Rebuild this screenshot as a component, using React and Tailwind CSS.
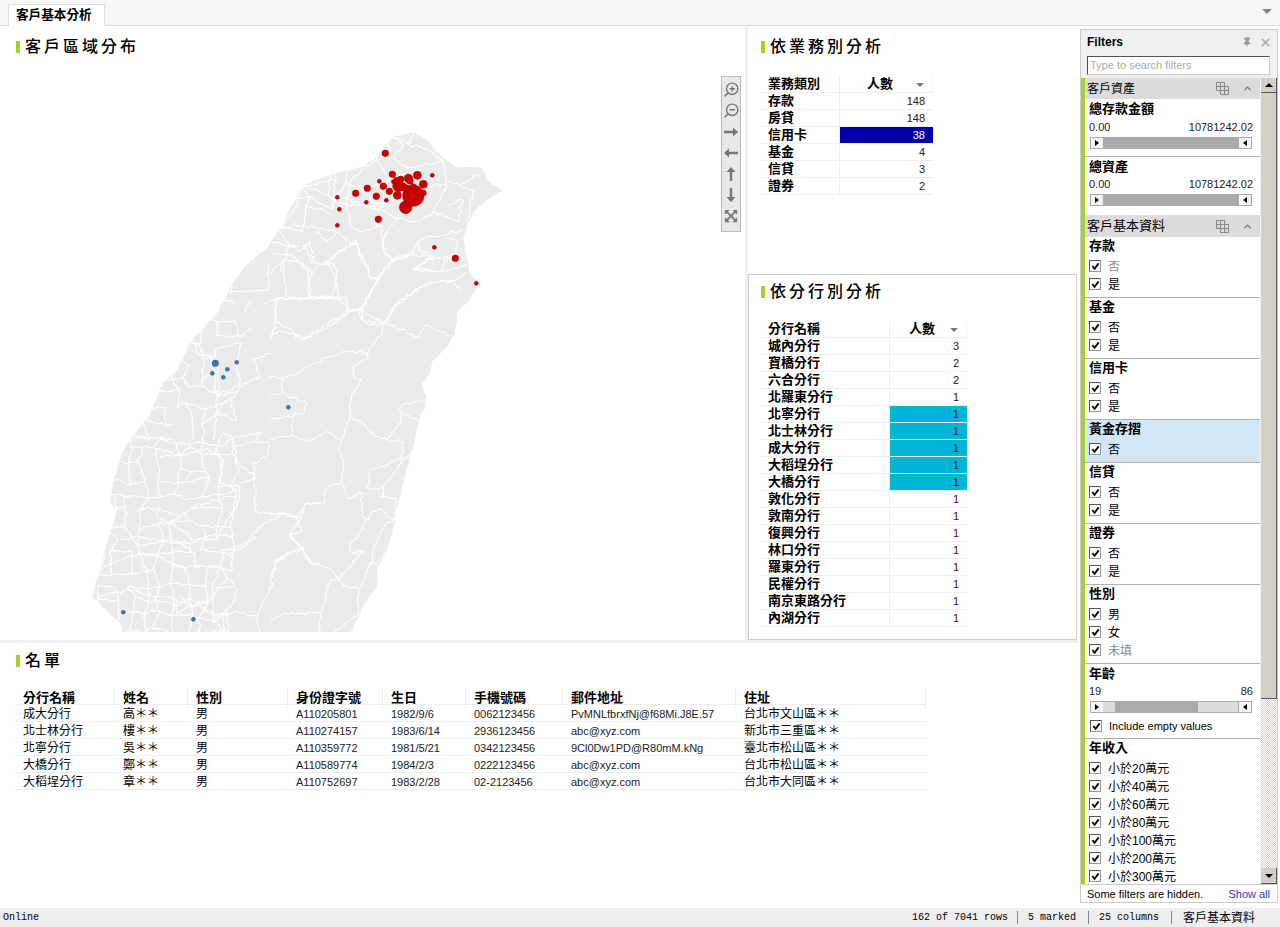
import { ZoomIn, ZoomOut, ChevronUp, X, Pin } from 'lucide-react'

// map outline in page coordinates
const outline = [[393,137],[413,132],[427,140],[443,158],[457,167],[482,168],[487,180],[503,191],[487,200],[473,213],[467,225],[463,238],[470,273],[478,283],[470,300],[458,310],[455,333],[447,347],[432,362],[430,373],[422,383],[427,400],[420,417],[413,447],[407,467],[398,503],[395,522],[388,547],[377,570],[377,587],[365,603],[350,634],[123,634],[120,623],[92,597],[100,570],[108,540],[117,510],[110,503],[113,483],[122,453],[132,437],[150,415],[163,383],[177,370],[190,343],[217,313],[233,282],[247,265],[267,248],[287,215],[303,185],[330,175],[363,167],[377,157]]

// district lines, noted in three different crops of the map
const east = [
  [[260,0],[265,45],[295,80],[300,110],[325,120],[355,70],[430,35],[445,0]],
  [[340,0],[345,35],[365,62],[430,35]],
  [[430,85],[470,60],[530,50],[585,55]],
  [[430,85],[510,95],[530,50]],
  [[350,250],[375,195],[450,140],[510,125],[550,125],[575,150]],
  [[325,120],[270,210],[345,250],[325,290],[290,340],[290,360],[250,380],[250,405],[275,420],[245,465],[240,530],[215,600],[205,630],[220,660],[215,730],[235,775],[275,760],[275,825],[295,840],[325,805],[350,830],[380,840]],
  [[345,250],[445,290],[465,255],[550,290]],
  [[270,210],[235,215],[205,170],[115,175],[20,175],[15,260],[0,300]],
  [[270,210],[275,240],[305,255],[345,250]],
  [[235,215],[200,245],[140,280],[100,300],[50,275],[0,280]],
  [[290,340],[230,335],[175,350],[110,380],[70,405],[40,415],[0,410]],
  [[40,415],[35,460],[0,465]],
  [[35,460],[110,490],[100,520],[70,525],[65,585],[110,605],[170,575],[215,600]],
  [[240,530],[280,550],[310,585],[350,600]],
  [[350,600],[390,550],[395,495],[470,480]],
  [[395,520],[445,540]],
  [[350,600],[400,605],[395,650],[340,680],[300,690],[290,745],[340,745],[395,660],[425,645]],
  [[0,535],[65,530]],
  [[0,600],[30,590],[65,585]],
  [[215,730],[170,745],[165,785],[105,795],[95,830],[60,885],[100,925],[120,965],[185,990],[205,1020],[240,1045],[265,1045],[265,1120],[195,1175]],
  [[100,925],[50,940],[15,975],[5,1015],[0,1015]],
  [[0,825],[40,818],[80,830],[95,830]],
  [[205,1020],[280,935],[240,935],[240,905],[260,895],[290,840]],
  [[340,745],[335,770],[380,775],[375,840],[350,845],[320,905],[300,970],[325,975]],
  [[300,970],[270,1045]],
  [[205,1020],[180,1020],[155,1110],[145,1175]],
  [[0,1145],[40,1120],[150,1120]],
  [[260,0],[170,65],[125,95],[115,170]],
  [[195,110],[205,170]],
  [[170,65],[205,115]],
  [[100,15],[130,70]],
  [[0,100],[40,60],[100,70],[125,95]],
  [[40,60],[50,170]],
]

const south = [
  [[340,10],[355,45],[395,50],[405,100],[410,165],[420,160],[500,130],[540,110],[520,60],[575,40]],
  [[410,165],[410,240],[400,300]],
  [[155,290],[200,300],[240,290],[280,310],[380,310],[420,320],[470,290],[550,280]],
  [[240,350],[320,345],[380,325],[420,350],[425,430],[480,440],[470,500],[440,540],[410,600],[345,600],[290,560],[230,530],[240,500]],
  [[330,500],[470,465]],
  [[120,600],[180,590],[240,600],[300,610],[345,640],[345,680],[420,680]],
  [[60,690],[120,660],[190,640],[240,650],[300,680],[370,680]],
  [[50,775],[90,760],[160,750],[220,770],[260,770],[290,780],[290,820],[350,790],[400,825],[430,820]],
  [[525,410],[480,430]],
  [[525,410],[525,510],[540,520],[610,520],[650,535],[680,490],[720,490]],
  [[610,520],[540,560],[490,620],[450,640]],
  [[650,535],[665,570],[630,590],[660,620],[690,670],[720,670]],
  [[525,410],[520,370],[565,345],[565,305],[530,305],[465,320],[475,370],[525,405]],
  [[525,305],[540,280]],
  [[530,830],[470,815],[430,825]],
  [[530,830],[540,876]],
  [[530,830],[580,730],[570,720],[590,660],[660,630]],
  [[420,630],[470,625],[530,590]],
  [[440,710],[470,745],[460,790],[430,820],[430,876]],
  [[420,680],[440,710],[380,790],[330,800],[300,770]],
]

const north = [
  [[370,180],[440,210],[480,235]],
  [[450,150],[445,210],[500,240],[510,300]],
  [[550,130],[510,175],[500,240],[545,240],[640,230]],
  [[590,100],[620,150]],
  [[640,35],[670,60],[640,100],[680,130],[730,120],[790,110]],
  [[700,20],[690,60],[740,70],[790,110]],
  [[790,110],[800,170],[840,180],[900,145]],
  [[730,180],[800,180],[760,260],[720,290],[650,280],[610,340],[610,380],[640,405]],
  [[545,240],[600,250],[650,280]],
  [[510,300],[540,320],[600,300],[610,340]],
  [[840,180],[880,200],[862,300]],
  [[800,240],[850,225],[835,290],[760,260]],
  [[720,340],[790,330],[850,315]],
  [[720,340],[715,375],[760,395],[700,435],[780,440],[862,420]],
  [[800,340],[830,345],[830,380],[800,410]],
  [[640,405],[700,390],[760,395]],
  [[600,460],[640,405]],
  [[530,360],[550,400],[570,460],[600,460]],
  [[505,350],[530,360],[530,345]],
  [[430,420],[500,360]],
  [[410,310],[470,320],[500,350]],
  [[470,320],[440,350],[410,320]],
  [[375,240],[440,260],[460,270]],
  [[300,310],[370,300],[410,310]],
  [[320,360],[360,380],[390,350],[400,410],[430,420]],
  [[280,390],[330,390],[370,420],[385,440],[385,515]],
  [[430,420],[460,415],[470,460],[460,515],[385,515]],
  [[290,520],[500,520],[505,560],[370,640],[290,590],[285,530]],
  [[500,560],[545,550]],
  [[545,550],[595,460]],
  [[545,550],[550,590],[610,595],[650,540],[745,470],[830,465],[860,440]],
  [[370,180],[350,240],[300,310]],
]

const fromEast = ([x, y]) => [270 + x / 3, 240 + y / 3]
const fromSouth = ([x, y]) => [80 + x / 3, 340 + y / 3]
const fromNorth = ([x, y]) => [180 + x / 3, 125 + y / 3]

// small fixed wobble, so lines look like real district borders
let seed = 11
const rand = () => {
  seed = (seed * 16807) % 2147483647
  return seed / 2147483647 - 0.5
}

const wobble = (points, amp = 3) => {
  let d = `M${points[0][0].toFixed(1)} ${points[0][1].toFixed(1)}`
  for (let i = 1; i < points.length; i++) {
    const [ax, ay] = points[i - 1]
    const [bx, by] = points[i]
    const steps = Math.max(1, Math.round(Math.hypot(bx - ax, by - ay) / 3))
    for (let s = 1; s <= steps; s++) {
      const end = s === steps
      const x = ax + ((bx - ax) * s) / steps + (end ? 0 : rand() * amp)
      const y = ay + ((by - ay) * s) / steps + (end ? 0 : rand() * amp)
      d += `L${x.toFixed(1)} ${y.toFixed(1)}`
    }
  }
  return d
}

// the west and the north have many small districts: an uneven mesh
const edgeOfSmall = [[130,450],[200,440],[220,345],[300,285],[345,245],[640,235]]
const isSmall = (x, y) => {
  for (let i = 1; i < edgeOfSmall.length; i++) {
    const [ay, ax] = edgeOfSmall[i - 1]
    const [by, bx] = edgeOfSmall[i]
    if (y >= ay && y <= by) return x <= ax + ((bx - ax) * (y - ay)) / (by - ay)
  }
  return false
}

const mesh = (top, bottom, size, keep) => {
  const nodes = []
  for (let y = top; y <= bottom; y += size) {
    const row = []
    for (let x = 84; x <= 470; x += size) {
      row.push([x + rand() * size * 0.9, y + rand() * size * 0.9])
    }
    nodes.push(row)
  }
  const lines = []
  nodes.forEach((row, r) =>
    row.forEach((node, c) => {
      const right = row[c + 1]
      const below = nodes[r + 1]?.[c]
      if (right && isSmall(...node) && isSmall(...right) && rand() + 0.5 < keep) lines.push([node, right])
      if (below && isSmall(...node) && isSmall(...below) && rand() + 0.5 < keep) lines.push([node, below])
    })
  )
  return lines.map((l) => wobble(l, 2.5))
}

const borders = [
  ...east.map((l) => wobble(l.map(fromEast))),
  ...south.map((l) => wobble(l.map(fromSouth))),
  ...north.map((l) => wobble(l.map(fromNorth))),
  ...mesh(136, 296, 22, 0.7),
  ...mesh(300, 640, 15, 0.72),
]

const coast = wobble([...outline, outline[0]], 1.5) + 'Z'

const redDots = [[616,85,10],[637,148,10],[712,151,12],[757,151,6],[598,169,6],[610,184,10],[562,190,10],[527,205,10],[589,214,10],[628,199,10],[652,211,12],[472,217,6],[559,232,6],[619,226,6],[478,253,6],[595,283,10],[472,301,6],[763,367,6],[826,400,10],[889,475,6],[700,212,32],[677,247,19],[730,178,12],[730,204,9],[685,160,13],[662,163,10],[648,165,8],[655,183,17],[668,185,12],[700,184,8],[680,190,10],[690,168,10],[640,170,6]]
const blueDots = [[406,70,10],[470,67,6],[442,88,6],[397,100,6],[430,112,6],[625,202,6],[130,817,6],[340,838,6]]

const services = [['存款', 148], ['房貸', 148], ['信用卡', 38], ['基金', 4], ['信貸', 3], ['證券', 2]]
const branches = [['城內分行', 3], ['寶橋分行', 2], ['六合分行', 2], ['北羅東分行', 1], ['北寧分行', 1], ['北士林分行', 1], ['成大分行', 1], ['大稻埕分行', 1], ['大橋分行', 1], ['敦化分行', 1], ['敦南分行', 1], ['復興分行', 1], ['林口分行', 1], ['羅東分行', 1], ['民權分行', 1], ['南京東路分行', 1], ['內湖分行', 1]]
const people = [
  ['成大分行', '高＊＊', '男', 'A110205801', '1982/9/6', '0062123456', 'PvMNLfbrxfNj@f68Mi.J8E.57', '台北市文山區＊＊'],
  ['北士林分行', '樓＊＊', '男', 'A110274157', '1983/6/14', '2936123456', 'abc@xyz.com', '新北市三重區＊＊'],
  ['北寧分行', '吳＊＊', '男', 'A110359772', '1981/5/21', '0342123456', '9Cl0Dw1PD@R80mM.kNg', '臺北市松山區＊＊'],
  ['大橋分行', '鄭＊＊', '男', 'A110589774', '1984/2/3', '0222123456', 'abc@xyz.com', '台北市松山區＊＊'],
  ['大稻埕分行', '章＊＊', '男', 'A110752697', '1983/2/28', '02-2123456', 'abc@xyz.com', '台北市大同區＊＊'],
]
const peopleHeader = ['分行名稱', '姓名', '性別', '身份證字號', '生日', '手機號碼', '郵件地址', '住址']
const peopleCols = 'grid grid-cols-[100px_73px_100px_95px_83px_97px_173px_190px]'

function Title({ children }) {
  return (
    <div className="flex items-center gap-[5px] pl-4">
      <div className="w-1 h-3 bg-[#a6d02d]" />
      <span className="text-base font-medium tracking-[3px] text-black leading-none">{children}</span>
    </div>
  )
}

function CountTable({ head, rows, nameWidth, marked, markColor, markText, darkFrom }) {
  return (
    <div className="text-[13px]">
      <div className="flex h-[17px] border-b border-[#eee] items-center font-bold">
        <div className="pl-[7px] border-r border-[#eee] h-full flex items-center" style={{ width: nameWidth }}>{head}</div>
        <div className="flex-1 flex items-center justify-center relative h-full border-r border-[#f4f4f4]">
          <span className="mr-3">人數</span>
          <span className="absolute right-2 top-[7px] w-0 h-0 border-x-4 border-x-transparent border-t-[4px] border-t-[#777]" />
        </div>
      </div>
      {rows.map(([name, count], i) => (
        <div key={name} className="flex h-[17px] border-b border-[#eee] items-center">
          <div className="pl-[7px] font-bold h-full flex items-center border-r border-[#eee]" style={{ width: nameWidth }}>{name}</div>
          <div className={`flex-1 h-full flex items-center justify-end pr-2 text-[11px] ${marked.includes(i) ? `${markColor} ${markText}` : i >= darkFrom ? 'text-[#500060]' : 'text-[#222]'}`}>
            {count}
          </div>
        </div>
      ))}
    </div>
  )
}

function ToolArrow({ turn }) {
  return (
    <svg viewBox="0 0 16 16" className={`w-4 h-4 ${turn}`}>
      <path d="M1 6.8h9V3.5l5 4.5-5 4.5V9.2H1z" fill="#777" />
    </svg>
  )
}

function ToolFit() {
  return (
    <svg viewBox="0 0 16 16" className="w-[14px] h-[14px]" fill="#777" stroke="#777">
      <path d="M1 1h5.5L1 6.5zM15 1v5.5L9.5 1zM1 15v-5.5L6.5 15zM15 15H9.5L15 9.5z" stroke="none" />
      <path d="M3 3l10 10M13 3L3 13" strokeWidth="2.2" />
    </svg>
  )
}

function MapTools() {
  const tools = [
    <ZoomIn size={17} strokeWidth={2} className="-scale-x-100" />,
    <ZoomOut size={17} strokeWidth={2} className="-scale-x-100" />,
    <ToolArrow turn="" />,
    <ToolArrow turn="rotate-180" />,
    <ToolArrow turn="-rotate-90" />,
    <ToolArrow turn="rotate-90" />,
    <ToolFit />,
  ]
  return (
    <div className="absolute left-[721px] top-[50px] w-5 h-[156px] bg-[#e8e8e8] border border-[#bbb] flex flex-col items-center pt-[2px] text-[#777]">
      {tools.map((tool, i) => (
        <div key={i} className="h-[21px] flex items-center justify-center">{tool}</div>
      ))}
    </div>
  )
}

function TwMap() {
  return (
    <svg viewBox="0 68 745 564" className="block w-[745px] h-[564px]">
      <defs>
        <clipPath id="island">
          <path d={coast} />
        </clipPath>
      </defs>
      <path d={coast} fill="#ebebeb" />
      <g clipPath="url(#island)">
        {borders.map((d, i) => (
          <path key={i} d={d} fill="none" stroke="#fff" strokeWidth="1.1" strokeLinejoin="round" />
        ))}
      </g>
      {redDots.map(([x, y, r], i) => (
        <circle key={i} cx={180 + x / 3} cy={125 + y / 3} r={r / 3} fill="#c80000" stroke="#a00000" strokeWidth="0.5" />
      ))}
      {blueDots.map(([x, y, r], i) => (
        <circle key={i} cx={80 + x / 3} cy={340 + y / 3} r={r / 3} fill="#3f75ab" stroke="#35628f" strokeWidth="0.5" />
      ))}
    </svg>
  )
}

function Check({ label, gray, latin }) {
  return (
    <div className="flex items-center h-[18px] pl-1">
      <span className="w-3 h-3 bg-white border border-[#999] border-t-[#555] border-l-[#555] flex items-center justify-center shrink-0">
        <svg viewBox="0 0 10 10" className="w-[9px] h-[9px]">
          <path d="M1.5 4.5 L4 7.5 L8.5 1.5" fill="none" stroke="#000" strokeWidth="2" />
        </svg>
      </span>
      <span className={`ml-[7px] ${latin ? 'text-[11px]' : 'text-xs pt-[2px]'} ${gray ? 'text-[#888]' : 'text-black'}`}>{label}</span>
    </div>
  )
}

function ArrowBtn({ left }) {
  return (
    <span className="w-3 h-full bg-[#f4f4f4] flex items-center justify-center shrink-0">
      <span className={`w-0 h-0 border-y-[3px] border-y-transparent ${left ? 'border-r-[4px] border-r-black' : 'border-l-[4px] border-l-black'}`} />
    </span>
  )
}

function Range({ from, to, age }) {
  return (
    <div className="px-1">
      <div className="flex justify-between text-[11px] text-[#222] h-[17px] items-center pr-[3px]">
        <span>{from}</span>
        <span>{to}</span>
      </div>
      <div className="flex h-3 w-[162px] ml-px mt-px border border-[#aaa] bg-[#aaa]">
        <ArrowBtn />
        {age ? (
          <div className="flex-1 flex">
            <div className="w-3 bg-[#ddd]" />
            <div className="w-[83px] bg-[#aaa]" />
            <div className="flex-1 bg-[#ddd]" />
          </div>
        ) : (
          <div className="flex-1" />
        )}
        <span className="w-px bg-[#aaa]" />
        <ArrowBtn left />
      </div>
    </div>
  )
}

function FilterHead({ label, size, height }) {
  return (
    <div className={`${height} bg-[#dcdcdc] flex items-center pl-[2px] pr-[7px] shrink-0`}>
      <span className={`${size} flex-1`}>{label}</span>
      <svg viewBox="0 0 13 13" className="w-[13px] h-[13px] mr-[13px]" fill="none" stroke="#888">
        <path d="M.5 .5H8.5V4.5H12.5V12.5H4.5V8.5H.5ZM4.5 .5V8.5M.5 4.5H12.5M8.5 4.5V12.5M4.5 8.5H12.5" />
      </svg>
      <ChevronUp size={11} strokeWidth={3} className="text-[#777]" />
    </div>
  )
}

function CheckGroup({ title, items, grays = [], active, last }) {
  return (
    <div className={`${last ? '' : 'border-b border-[#b0b0b0]'} ${active ? 'bg-[#d2e6f5] pb-1' : 'pb-1'}`}>
      <div className="h-5 flex items-center pl-1 pb-[2px] text-[13px] font-bold">{title}</div>
      {items.map((item) => (
        <Check key={item} label={item} gray={grays.includes(item)} />
      ))}
    </div>
  )
}

function Filters() {
  const yesNo = ['否', '是']
  const income = ['小於20萬元', '小於40萬元', '小於60萬元', '小於80萬元', '小於100萬元', '小於200萬元', '小於300萬元']
  return (
    <div className="w-[198px] ml-[2px] mt-[3px] mb-[5px] border border-[#ccc] bg-[#f0f0f0] flex flex-col text-black">
      <div className="h-[26px] flex items-center pl-[6px] pr-[5px] pb-[2px] shrink-0">
        <span className="text-xs font-bold flex-1">Filters</span>
        <Pin size={10} className="text-[#999] mr-[7px]" fill="#999" />
        <X size={13} strokeWidth={3} className="text-[#aaa]" />
      </div>
      <div className="ml-[6px] mr-[7px] h-[19px] bg-white border border-[#ccc] border-t-[#555] border-l-[#555] text-[11px] text-[#aaa] flex items-center pl-0.5 shrink-0">
        Type to search filters
      </div>
      <div className="flex-1 mt-[3px] flex min-h-0 overflow-hidden">
        <div className="w-1 bg-[#a6d02d] shrink-0" />
        <div className="w-[175px] bg-white overflow-hidden">
          <FilterHead label="客戶資產" size="text-xs" height="h-[21px]" />
          <div className="h-[116px]">
            <div className="border-b border-[#b0b0b0] pb-[7px]">
              <div className="h-5 flex items-center pl-1 text-[13px] font-bold">總存款金額</div>
              <Range from="0.00" to="10781242.02" />
            </div>
            <div className="h-[19px] flex items-center pl-1 text-[13px] font-bold">總資產</div>
            <Range from="0.00" to="10781242.02" />
          </div>
          <FilterHead label="客戶基本資料" size="text-[13px]" height="h-[22px]" />
          <CheckGroup title="存款" items={yesNo} grays={['否']} />
          <CheckGroup title="基金" items={yesNo} />
          <CheckGroup title="信用卡" items={yesNo} />
          <CheckGroup title="黃金存摺" items={['否']} active />
          <CheckGroup title="信貸" items={yesNo} />
          <CheckGroup title="證券" items={yesNo} />
          <CheckGroup title="性別" items={['男', '女', '未填']} grays={['未填']} />
          <div className="border-b border-[#b0b0b0] pb-[3px]">
            <div className="h-[19px] flex items-center pl-1 text-[13px] font-bold">年齡</div>
            <Range from="19" to="86" age />
            <div className="mt-1 pl-px">
              <Check label="Include empty values" latin />
            </div>
          </div>
          <CheckGroup title="年收入" items={income} last />
        </div>
        <div className="w-4 flex flex-col shrink-0 ml-px">
          <div className="h-[15px] bg-[#d4d0c8] border-r border-b border-[#555] flex items-center justify-center shrink-0">
            <span className="w-0 h-0 border-x-4 border-x-transparent border-b-[4px] border-b-black" />
          </div>
          <div className="h-[606px] bg-[#d4d0c8] border-r border-b border-[#555] shrink-0" />
          <div className="flex-1 bg-[repeating-conic-gradient(#d4d0c8_0_25%,#fff_0_50%)] bg-[length:2px_2px]" />
          <div className="h-4 bg-[#d4d0c8] border-r border-b border-[#555] flex items-center justify-center shrink-0">
            <span className="w-0 h-0 border-x-4 border-x-transparent border-t-[4px] border-t-black" />
          </div>
        </div>
      </div>
      <div className="h-[18px] bg-white border-t border-[#ccc] flex items-center justify-between pl-[6px] pr-[7px] pt-[2px] text-[11px] shrink-0">
        <span>Some filters are hidden.</span>
        <span className="text-[#3333cc]">Show all</span>
      </div>
    </div>
  )
}

export default function App() {
  return (
    <div className="w-[1280px] h-[927px] flex flex-col bg-white overflow-hidden text-black font-['Liberation_Sans','Noto_Sans_CJK_TC',sans-serif]">
      <div className="h-[26px] bg-[#f7f7f7] border-b border-[#ddd] flex items-end pl-2 relative shrink-0">
        <div className="w-[97px] h-[22px] -mb-px bg-white border border-b-0 border-[#ddd] flex items-center pl-[7px] text-[12.6px] font-bold">
          客戶基本分析
        </div>
        <span className="absolute right-2 top-[9px] w-0 h-0 border-x-[5px] border-x-transparent border-t-[5px] border-t-[#888]" />
      </div>

      <div className="flex-1 flex min-h-0">
        <div className="w-[1078px] flex flex-col">
          <div className="h-[617px] flex border-b-[3px] border-[#f0f0f0] shrink-0">
            <div className="w-[745px] relative overflow-hidden">
              <div className="h-[42px] flex items-center">
                <Title>客戶區域分布</Title>
              </div>
              <TwMap />
              <MapTools />
            </div>
            <div className="flex-1 border-l-[3px] border-[#f0f0f0] flex flex-col">
              <div className="h-[245px] shrink-0">
                <div className="h-[42px] flex items-center">
                  <div className="-ml-[3px]"><Title>依業務別分析</Title></div>
                </div>
                <div className="mt-2 ml-[13px] w-[172px]">
                  <CountTable head="業務類別" rows={services} nameWidth={79} marked={[2]} markColor="bg-[#0000a8]" markText="text-white" darkFrom={99} />
                </div>
              </div>
              <div className="flex-1 mt-[3px] border border-[#ccc] mr-px">
                <div className="h-[33px] flex items-center">
                  <div className="-ml-1"><Title>依分行別分析</Title></div>
                </div>
                <div className="mt-[13px] ml-[12px] w-[206px]">
                  <CountTable head="分行名稱" rows={branches} nameWidth={129} marked={[4, 5, 6, 7, 8]} markColor="bg-[#00b6d6]" markText="text-[#222]" darkFrom={9} />
                </div>
              </div>
            </div>
          </div>

          <div className="flex-1">
            <div className="h-[35px] flex items-center">
              <Title>名單</Title>
            </div>
            <div className="mt-[10px] ml-[15px] w-[911px]">
              <div className={`${peopleCols} h-[17px] border-b border-[#eee] text-[13px] font-bold`}>
                {peopleHeader.map((h) => (
                  <div key={h} className="pl-2 flex items-center border-r border-[#eee]">{h}</div>
                ))}
              </div>
              {people.map((row) => (
                <div key={row[3]} className={`${peopleCols} h-[17px] border-b border-[#eee]`}>
                  {row.map((cell, i) => (
                    <div key={i} className={`pl-2 pt-px flex items-center whitespace-nowrap ${i < 3 || i === 7 ? 'text-xs text-black' : 'text-[11px] text-[#222]'} ${i === 4 ? 'text-[#4b0036]' : ''}`}>
                      {cell}
                    </div>
                  ))}
                </div>
              ))}
            </div>
          </div>
        </div>
        <Filters />
      </div>

      <div className="h-[19px] bg-[#eee] flex items-center shrink-0 text-[10px] font-['Liberation_Mono',monospace] pl-[3px] text-black">
        <span className="flex-1">Online</span>
        <span className="pr-[9px]">162 of 7041 rows</span>
        <span className="border-l border-[#888] h-[13px] flex items-center pl-[10px] pr-[12px]">5 marked</span>
        <span className="border-l border-[#888] h-[13px] flex items-center pl-[10px] pr-[12px]">25 columns</span>
        <span className="border-l border-[#888] h-[13px] flex items-center pl-[11px] pr-[25px] text-xs font-['Liberation_Sans','Noto_Sans_CJK_TC',sans-serif]">客戶基本資料</span>
      </div>
    </div>
  )
}
